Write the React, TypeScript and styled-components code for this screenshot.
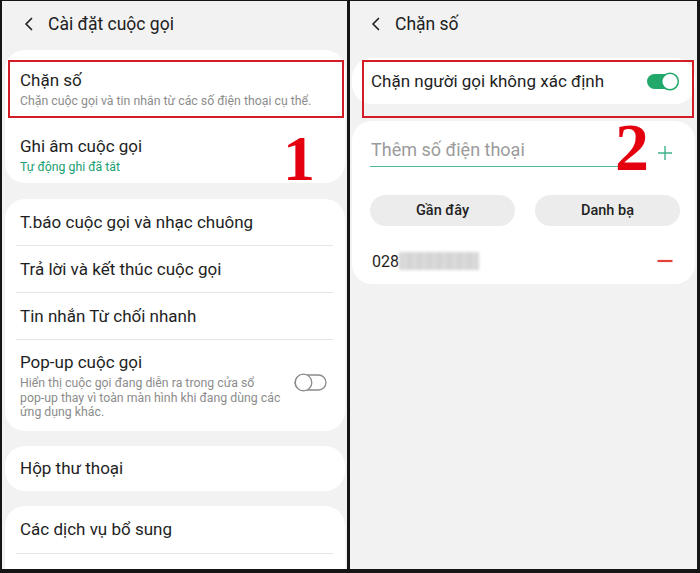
import React from "react";
import styled, { createGlobalStyle } from "styled-components";

const Global = createGlobalStyle`
  html, body { margin: 0; padding: 0; background: #151515; }
  body { font-family: Roboto, "Noto Sans", "Liberation Sans", sans-serif; }
  * { box-sizing: border-box; }
`;

const Frame = styled.div`
  width: 700px;
  height: 573px;
  background: #151515;
  display: grid;
  grid-template-columns: 345px 347px;
  column-gap: 3px;
  padding: 1px 3px 4px 2px;
`;

const Panel = styled.div<{ $side: "left" | "right" }>`
  position: relative;
  overflow: hidden;
  background: #f2f2f2;
  display: flex;
  flex-direction: column;
  padding: ${(p) => (p.$side === "left" ? "0 2px 0 3px" : "0 2px 0 2px")};
`;

const Header = styled.div`
  height: 49px;
  flex: none;
  display: flex;
  align-items: center;
  gap: 14px;
  padding: 0 0 4px 19px;
  font-size: 17.5px;
  color: #202020;
`;

const Card = styled.div<{ $gap?: number; $top?: number }>`
  background: #ffffff;
  border-radius: 20px;
  margin-top: ${(p) => p.$top ?? 0}px;
  margin-bottom: ${(p) => p.$gap ?? 16}px;
  display: flex;
  flex-direction: column;
  flex: none;
`;

const Item = styled.div<{ $two?: boolean; $h?: number; $pl?: number; $pt?: number; $pb?: number }>`
  display: flex;
  align-items: ${(p) => (p.$two ? "flex-start" : "center")};
  justify-content: space-between;
  padding: ${(p) =>
    p.$two
      ? `${p.$pt ?? 17}px 15px ${p.$pb ?? 9}px ${p.$pl ?? 15}px`
      : `0 15px 0 ${p.$pl ?? 15}px`};
  ${(p) => (p.$h ? `height: ${p.$h}px;` : "")}
`;

const TextCol = styled.div`
  display: flex;
  flex-direction: column;
`;

const Title = styled.div`
  font-size: 17px;
  line-height: 22px;
  color: #1e1e1e;
  white-space: nowrap;
`;

const Sub = styled.div<{ $green?: boolean }>`
  font-size: 12.3px;
  line-height: 14.5px;
  margin-top: 3px;
  white-space: nowrap;
  color: ${(p) => (p.$green ? "#17a072" : "#8c8c8c")};
`;

const Divider = styled.div`
  height: 1px;
  background: #e6e6e6;
  margin: 0 12px 0 11px;
`;

const Highlight = styled.div<{ $l: number; $t: number; $w: number; $h: number }>`
  position: absolute;
  left: ${(p) => p.$l}px;
  top: ${(p) => p.$t}px;
  width: ${(p) => p.$w}px;
  height: ${(p) => p.$h}px;
  border: 2px solid #d31c26;
  pointer-events: none;
`;

const Numeral = styled.div<{ $l: number; $t: number; $s: number }>`
  position: absolute;
  left: ${(p) => p.$l}px;
  top: ${(p) => p.$t}px;
  font-family: "Liberation Serif", "Times New Roman", serif;
  font-weight: 700;
  font-size: ${(p) => p.$s}px;
  line-height: 1;
  color: #e4000f;
`;

const SwitchSlot = styled.div`
  margin-top: 22px;
  margin-right: 3px;
`;

const InputRow = styled.div`
  display: flex;
  align-items: center;
  padding: 17px 22px 0 18px;
  gap: 38px;
`;

const Input = styled.div`
  flex: 1;
  font-size: 18px;
  line-height: 24px;
  color: #9b9b9b;
  padding: 0 0 4px 1px;
  border-bottom: 1.5px solid #4fb996;
`;

const ButtonRow = styled.div`
  display: grid;
  grid-template-columns: 1fr 1fr;
  column-gap: 20px;
  margin: 28px 15px 0 18px;
`;

const Pill = styled.div`
  height: 31px;
  border-radius: 16px;
  background: #ececec;
  display: flex;
  align-items: center;
  justify-content: center;
  font-size: 14.5px;
  font-weight: 500;
  color: #222;
`;

const NumberRow = styled.div`
  height: 46px;
  margin-top: 12px;
  display: flex;
  align-items: center;
  justify-content: space-between;
  padding: 0 22px 0 20px;
`;

const Phone = styled.div`
  display: flex;
  align-items: center;
  font-size: 16px;
  color: #1e1e1e;
`;

const Blur = styled.div`
  width: 80px;
  height: 18px;
  background: repeating-linear-gradient(
    90deg,
    #c9c9c9 0px,
    #d6d6d6 5px,
    #cdcdcd 10px
  );
  filter: blur(1.5px);
  opacity: 0.85;
`;

const Back = () => (
  <svg width="10" height="14" viewBox="0 0 10 14">
    <path d="M7.5 1.5 L2 7 L7.5 12.5" fill="none" stroke="#222" strokeWidth="1.7" strokeLinecap="round" strokeLinejoin="round" />
  </svg>
);

const SwitchOff = () => (
  <svg width="33" height="19" viewBox="0 0 33 19">
    <rect x="1" y="2" width="31" height="15" rx="7.5" fill="#fff" stroke="#8a8a8a" strokeWidth="1.3" />
    <circle cx="9.5" cy="9.5" r="8.3" fill="#fff" stroke="#8a8a8a" strokeWidth="1.3" />
  </svg>
);

const SwitchOn = () => (
  <svg width="34" height="19" viewBox="0 0 34 19">
    <rect x="1" y="2" width="31" height="15" rx="7.5" fill="#21a86a" />
    <circle cx="24" cy="9.5" r="8.3" fill="#fff" stroke="#21a86a" strokeWidth="1.5" />
  </svg>
);

const Plus = () => (
  <svg width="16" height="16" viewBox="0 0 16 16">
    <path d="M8 1 V15 M1 8 H15" stroke="#3db489" strokeWidth="1.4" />
  </svg>
);

const Minus = () => (
  <svg width="16" height="4" viewBox="0 0 16 4">
    <path d="M0.5 2 H15.5" stroke="#e3423a" strokeWidth="2.2" />
  </svg>
);

export default function App() {
  return (
    <>
      <Global />
      <Frame>
        <Panel $side="left">
          <Header>
            <Back />
            <span>Cài đặt cuộc gọi</span>
          </Header>
          <Card>
            <Item $two $pt={19}>
              <TextCol>
                <Title>Chặn số</Title>
                <Sub>Chặn cuộc gọi và tin nhắn từ các số điện thoại cụ thể.</Sub>
              </TextCol>
            </Item>
            <Item $two>
              <TextCol>
                <Title>Ghi âm cuộc gọi</Title>
                <Sub $green>Tự động ghi đã tắt</Sub>
              </TextCol>
            </Item>
          </Card>
          <Card $gap={15}>
            <Item $h={46}>
              <Title>T.báo cuộc gọi và nhạc chuông</Title>
            </Item>
            <Divider />
            <Item $h={46}>
              <Title>Trả lời và kết thúc cuộc gọi</Title>
            </Item>
            <Divider />
            <Item $h={46}>
              <Title>Tin nhắn Từ chối nhanh</Title>
            </Item>
            <Divider />
            <Item $two $pt={11} $pb={11}>
              <TextCol>
                <Title>Pop-up cuộc gọi</Title>
                <Sub>
                  Hiển thị cuộc gọi đang diễn ra trong cửa sổ
                  <br />
                  pop-up thay vì toàn màn hình khi đang dùng các
                  <br />
                  ứng dụng khác.
                </Sub>
              </TextCol>
              <SwitchSlot>
                <SwitchOff />
              </SwitchSlot>
            </Item>
          </Card>
          <Card $gap={15}>
            <Item $h={45}>
              <Title>Hộp thư thoại</Title>
            </Item>
          </Card>
          <Card>
            <Item $h={47}>
              <Title>Các dịch vụ bổ sung</Title>
            </Item>
            <Divider />
            <Item $h={47}>
              <Title>Cài đặt cuộc gọi khác</Title>
            </Item>
          </Card>
          <Highlight $l={6} $t={59} $w={336} $h={58} />
          <Numeral $l={281} $t={126} $s={64}>1</Numeral>
        </Panel>

        <Panel $side="right">
          <Header>
            <Back />
            <span>Chặn số</span>
          </Header>
          <Card $gap={17} $top={8}>
            <Item $h={46} $pl={19}>
              <Title>Chặn người gọi không xác định</Title>
              <SwitchOn />
            </Item>
          </Card>
          <Card>
            <InputRow>
              <Input>Thêm số điện thoại</Input>
              <Plus />
            </InputRow>
            <ButtonRow>
              <Pill>Gần đây</Pill>
              <Pill>Danh bạ</Pill>
            </ButtonRow>
            <NumberRow>
              <Phone>
                <span>028</span>
                <Blur />
              </Phone>
              <Minus />
            </NumberRow>
          </Card>
          <Highlight $l={12} $t={59} $w={332} $h={58} />
          <Numeral $l={265} $t={112} $s={68}>2</Numeral>
        </Panel>
      </Frame>
    </>
  );
}
